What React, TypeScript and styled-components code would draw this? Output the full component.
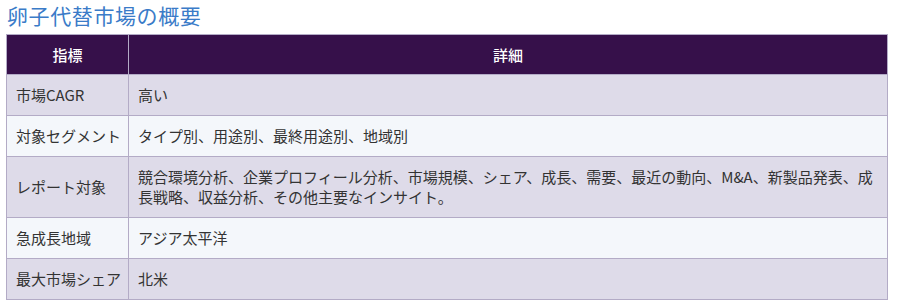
import React from "react";
import styled, { createGlobalStyle } from "styled-components";

const Global = createGlobalStyle`
  html, body { margin: 0; padding: 0; background: #ffffff; }
  body { font-family: "Noto Sans CJK JP", "Noto Sans", sans-serif; }
`;

const Page = styled.div`
  padding: 0 12px 0 6px;
  width: 882px;
`;

const Title = styled.h2`
  margin: 0;
  padding: 0 0 0 1px;
  height: 34px;
  line-height: 30px;
  font-size: 21px;
  font-weight: 400;
  color: #3a7bc8;
  letter-spacing: 0.6px;
  box-sizing: border-box;
`;

const Table = styled.table`
  width: 882px;
  border-collapse: collapse;
  border: 1px solid #b3abc6;
  font-size: 15px;
  color: #333333;
  table-layout: fixed;
`;

const HeadCell = styled.th<{ $w?: number }>`
  background: #36104a;
  color: #ffffff;
  font-weight: 500;
  height: 40px;
  padding: 0 10px;
  text-align: center;
  border: 1px solid #b3abc6;
  width: ${(p) => (p.$w ? `${p.$w}px` : "auto")};
  box-sizing: border-box;
`;

const Row = styled.tr<{ $alt: boolean }>`
  background: ${(p) => (p.$alt ? "#f4f7fb" : "#dedbe9")};
`;

const Cell = styled.td<{ $key?: boolean }>`
  border: 1px solid #b3abc6;
  padding: 10px 6px 10px 9px;
  line-height: 20px;
  vertical-align: middle;
  white-space: ${(p) => (p.$key ? "nowrap" : "normal")};
`;

const rows: [string, string][] = [
  ["市場CAGR", "高い"],
  ["対象セグメント", "タイプ別、用途別、最終用途別、地域別"],
  [
    "レポート対象",
    "競合環境分析、企業プロフィール分析、市場規模、シェア、成長、需要、最近の動向、M&A、新製品発表、成長戦略、収益分析、その他主要なインサイト。",
  ],
  ["急成長地域", "アジア太平洋"],
  ["最大市場シェア", "北米"],
];

export default function App() {
  return (
    <Page>
      <Global />
      <Title>卵子代替市場の概要</Title>
      <Table>
        <thead>
          <tr>
            <HeadCell $w={122}>指標</HeadCell>
            <HeadCell>詳細</HeadCell>
          </tr>
        </thead>
        <tbody>
          {rows.map(([k, v], i) => (
            <Row key={k} $alt={i % 2 === 1}>
              <Cell $key>{k}</Cell>
              <Cell>{v}</Cell>
            </Row>
          ))}
        </tbody>
      </Table>
    </Page>
  );
}
